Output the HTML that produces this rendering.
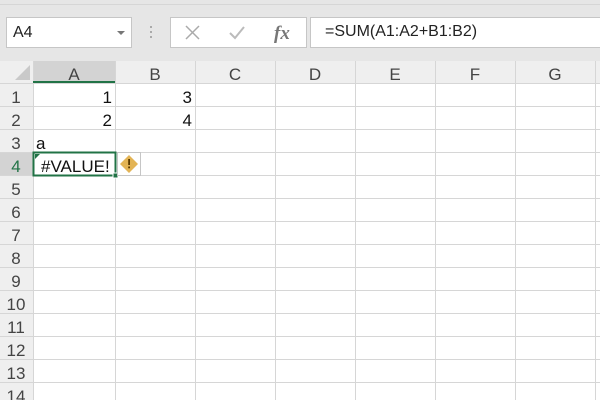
<!DOCTYPE html><html><head><style>
body{margin:0;width:600px;height:400px;overflow:hidden;background:#fff;font-family:"Liberation Sans","Noto Sans CJK SC",sans-serif;position:relative}
.a{position:absolute}
</style></head><body>
<div class="a" style="left:0;top:0;width:600px;height:61px;background:#e6e6e6"></div>
<div class="a" style="left:0;top:4px;width:600px;height:1px;background:#d6d6d6"></div>
<div class="a" style="left:6px;top:17px;width:126px;height:31px;background:#fff;border:1px solid #c6c6c6;box-sizing:border-box"></div>
<div class="a" style="left:13px;top:24px;font-size:16px;color:#222">A4</div>
<div class="a" style="left:117px;top:31px;width:0;height:0;border-left:4px solid transparent;border-right:4px solid transparent;border-top:4px solid #777"></div>
<div class="a" style="left:150px;top:26px;width:2px;height:2px;background:#aaa;box-shadow:0 5px #aaa,0 10px #aaa"></div>
<div class="a" style="left:170px;top:17px;width:137px;height:31px;background:#fff;border:1px solid #c6c6c6;box-sizing:border-box"></div>
<svg class="a" style="left:170px;top:17px" width="137" height="31"><path d="M16 9l13 13M29 9L16 22" stroke="#aaa" stroke-width="1.5"/><path d="M60 16l5 5 9-11" stroke="#bbb" stroke-width="2" fill="none"/><text x="104" y="22" font-family="Liberation Serif" font-style="italic" font-weight="bold" font-size="19" fill="#777">fx</text></svg>
<div class="a" style="left:310px;top:17px;width:300px;height:31px;background:#fff;border:1px solid #c6c6c6;box-sizing:border-box"></div>
<div class="a" style="left:325px;top:23px;font-size:16px;color:#222">=SUM(A1:A2+B1:B2)</div>
<svg class="a" style="left:0;top:61px" width="600" height="339">
<rect x="0" y="0" width="600" height="22" fill="#efefef"/>
<rect x="0" y="0" width="33" height="339" fill="#efefef"/>
<rect x="33" y="0" width="82" height="22" fill="#d3d3d3"/>
<rect x="0" y="91" width="33" height="23" fill="#d3d3d3"/>
<path d="M30 4L30 19L15 19Z" fill="#c9c9c9"/>
<g stroke="#d6d6d6" stroke-width="1">
<path d="M115.5 0V339M195.5 0V339M275.5 0V339M355.5 0V339M435.5 0V339M515.5 0V339M595.5 0V339M33.5 0V339"/>
<path d="M0 22.5H600M0 45.5H600M0 68.5H600M0 91.5H600M0 114.5H600M0 137.5H600M0 160.5H600M0 183.5H600M0 206.5H600M0 229.5H600M0 252.5H600M0 275.5H600M0 298.5H600M0 321.5H600"/>
</g>
<rect x="33" y="20" width="82" height="2" fill="#217346"/>
<g font-size="17" fill="#444" text-anchor="middle">
<text x="74" y="19">A</text><text x="155" y="19">B</text><text x="235" y="19">C</text><text x="315" y="19">D</text><text x="395" y="19">E</text><text x="475" y="19">F</text><text x="555" y="19">G</text>
<text x="16" y="42">1</text><text x="16" y="65">2</text><text x="16" y="88">3</text><text x="16" y="111" fill="#217346">4</text><text x="16" y="134">5</text><text x="16" y="157">6</text><text x="16" y="180">7</text><text x="16" y="203">8</text><text x="16" y="226">9</text><text x="16" y="249">10</text><text x="16" y="272">11</text><text x="16" y="295">12</text><text x="16" y="318">13</text><text x="16" y="341">14</text>
</g>
<g font-size="17" fill="#111">
<text x="112" y="42" text-anchor="end">1</text><text x="192" y="42" text-anchor="end">3</text>
<text x="112" y="65" text-anchor="end">2</text><text x="192" y="65" text-anchor="end">4</text>
<text x="36" y="88">a</text>
<text x="41" y="111">#VALUE!</text>
</g>
<rect x="33.5" y="91.5" width="82" height="23" fill="none" stroke="#217346" stroke-width="2"/>
<path d="M35 93h5l-5 5z" fill="#217346"/>
<rect x="113" y="112" width="5" height="5" fill="#217346" stroke="#fff" stroke-width="1"/>
<rect x="117.5" y="91.5" width="23" height="23" fill="#fff" stroke="#c6c6c6"/>
<path d="M129 94l9 9-9 9-9-9z" fill="#e3b455"/>
<rect x="128.2" y="98" width="1.8" height="6" fill="#5a3a00"/><rect x="128.2" y="105.5" width="1.8" height="1.8" fill="#5a3a00"/>
</svg>
</body></html>
